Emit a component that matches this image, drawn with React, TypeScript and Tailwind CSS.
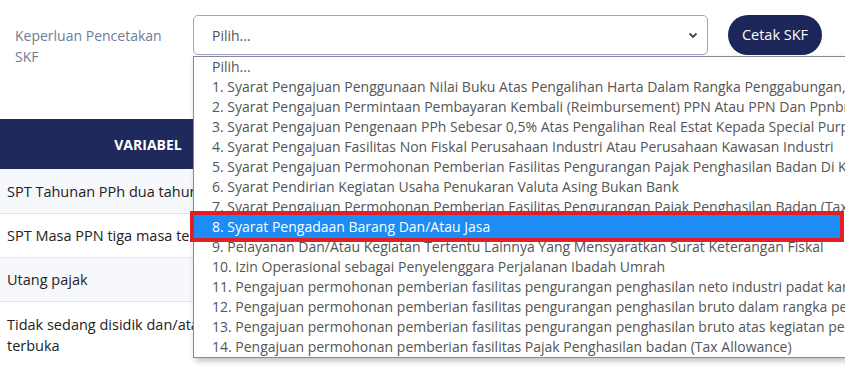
import React from "react";

const options = [
  "1. Syarat Pengajuan Penggunaan Nilai Buku Atas Pengalihan Harta Dalam Rangka Penggabungan, Peleburan, Atau Pemekaran Usaha",
  "2. Syarat Pengajuan Permintaan Pembayaran Kembali (Reimbursement) PPN Atau PPN Dan Ppnbm",
  "3. Syarat Pengajuan Pengenaan PPh Sebesar 0,5% Atas Pengalihan Real Estat Kepada Special Purpose Company",
  "4. Syarat Pengajuan Fasilitas Non Fiskal Perusahaan Industri Atau Perusahaan Kawasan Industri",
  "5. Syarat Pengajuan Permohonan Pemberian Fasilitas Pengurangan Pajak Penghasilan Badan Di Kawasan",
  "6. Syarat Pendirian Kegiatan Usaha Penukaran Valuta Asing Bukan Bank",
  "7. Syarat Pengajuan Permohonan Pemberian Fasilitas Pengurangan Pajak Penghasilan Badan (Tax Holiday)",
  "8. Syarat Pengadaan Barang Dan/Atau Jasa",
  "9. Pelayanan Dan/Atau Kegiatan Tertentu Lainnya Yang Mensyaratkan Surat Keterangan Fiskal",
  "10. Izin Operasional sebagai Penyelenggara Perjalanan Ibadah Umrah",
  "11. Pengajuan permohonan pemberian fasilitas pengurangan penghasilan neto industri padat karya",
  "12. Pengajuan permohonan pemberian fasilitas pengurangan penghasilan bruto dalam rangka penyediaan",
  "13. Pengajuan permohonan pemberian fasilitas pengurangan penghasilan bruto atas kegiatan penelitian",
  "14. Pengajuan permohonan pemberian fasilitas Pajak Penghasilan badan (Tax Allowance)",
];

const rows = [
  { lines: ["SPT Tahunan PPh dua tahun terakhir"], h: "h-[45px]", bg: "bg-[#f7f8fb]" },
  { lines: ["SPT Masa PPN tiga masa terakhir"], h: "h-[44px]", bg: "bg-white" },
  { lines: ["Utang pajak"], h: "h-[44px]", bg: "bg-[#f7f8fb]" },
  { lines: ["Tidak sedang disidik dan/atau dalam proses peradilan", "terbuka"], h: "h-[70px]", bg: "bg-white" },
];

export default function App() {
  return (
    <div
      className="relative w-[845px] h-[367px] overflow-hidden bg-white"
      style={{ fontFamily: '"Open Sans", "Noto Sans", sans-serif' }}
    >
      {/* top form row */}
      <div className="flex items-start h-[55px] pt-[15px] pl-[15px]">
        <div className="w-[178px] pt-[10px] text-[14px] leading-[21px] text-[#6f7c99]">
          <div className="w-[155px]">Keperluan Pencetakan SKF</div>
        </div>
        <div className="flex items-center justify-between w-[515px] h-[40px] rounded-[5px] border border-[#9ea2dc] pl-[18px] pr-[8px] text-[14px] text-[#555]">
          <span>Pilih...</span>
          <svg width="10" height="7" viewBox="0 0 10 7" className="mr-[1px]">
            <path d="M1.5 1.5 L5 5 L8.5 1.5" fill="none" stroke="#444" strokeWidth="1.8" />
          </svg>
        </div>
        <button className="ml-[20px] w-[94px] h-[40px] rounded-full bg-[#1c2659] text-white text-[14.5px] font-medium">
          Cetak SKF
        </button>
      </div>

      {/* table */}
      <div className="mt-[64px] w-full">
        <div className="flex h-[50px] bg-[#1f295b] text-white">
          <div className="w-[296px] flex items-center justify-center font-bold text-[14px]">VARIABEL</div>
          <div className="flex-1" />
        </div>
        {rows.map((r, i) => (
          <div key={i} className={`flex ${r.h} ${r.bg} border-b border-[#e6e8ee]`}>
            <div
              className={`w-[296px] pl-[7px] text-[14.5px] leading-[21px] text-[#222] flex flex-col ${
                i === 3 ? "justify-start pt-[12px]" : "justify-center"
              }`}
            >
              {r.lines.map((l, j) => (
                <div key={j} className="whitespace-nowrap">
                  {l}
                </div>
              ))}
            </div>
            <div className="flex-1" />
          </div>
        ))}
      </div>

      {/* dropdown list overlay */}
      <div className="absolute left-[193px] top-[56px] w-[720px] border border-[#8a8a8a] bg-white shadow-[2px_3px_6px_rgba(0,0,0,0.25)] text-[14px] leading-[20px] text-[#555]">
        <div className="h-[20px] pl-[18px] whitespace-nowrap">Pilih...</div>
        {options.map((o, i) =>
          i === 7 ? (
            <div key={i} className="relative h-[20px] pl-[18px] whitespace-nowrap text-white">
              <span className="absolute left-[-4px] top-[-6px] bottom-[-5px] w-[654px] border-4 border-[#e41e26] bg-[#1e8cf5]" />
              <span className="relative">{o}</span>
            </div>
          ) : (
            <div key={i} className="h-[20px] pl-[18px] whitespace-nowrap">
              {o}
            </div>
          )
        )}
      </div>
    </div>
  );
}
